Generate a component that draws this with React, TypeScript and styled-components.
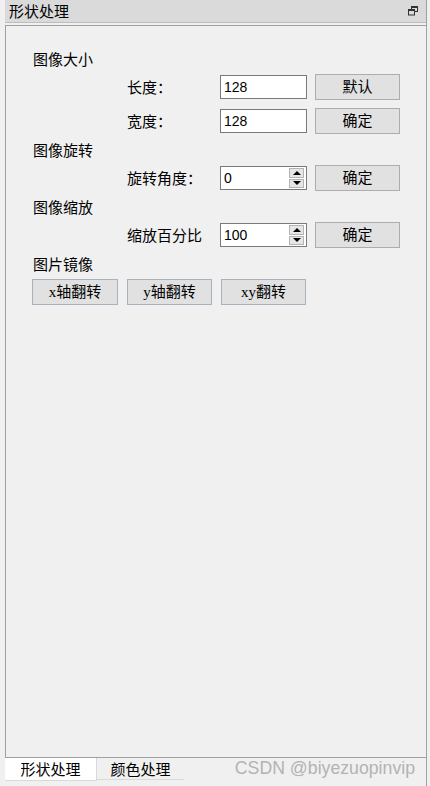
import styled, { createGlobalStyle } from "styled-components";

const GlobalStyle = createGlobalStyle`
  html, body {
    margin: 0;
    padding: 0;
    background: #f0f0f0;
  }
  body {
    font-family: "Noto Sans CJK SC", "Liberation Sans", sans-serif;
    color: #000;
  }
`;

const Dock = styled.div`
  box-sizing: border-box;
  display: flex;
  flex-direction: column;
  width: 422px;
  height: 786px;
  margin-left: 5px;
  border-right: 1px solid #a0a0a0;
`;

const TitleBar = styled.header`
  box-sizing: border-box;
  display: flex;
  flex: none;
  align-items: center;
  justify-content: space-between;
  height: 23px;
  margin-bottom: 2px;
  padding: 0 7px 0 4px;
  border-bottom: 1px solid #bdbdbd;
  background: #dadada;
  font-size: 15px;
  line-height: 22px;
`;

const Frame = styled.section`
  box-sizing: border-box;
  flex: 1;
  border: 1px solid #a0a0a0;
  border-right: none;
  padding: 23px 0 0 27px;
`;

const Heading = styled.div`
  height: 20px;
  font-size: 15px;
  line-height: 20px;
`;

const Group = styled.div`
  display: flex;
  flex-direction: column;
  gap: 8px;
  padding: 5px 0 6px;
`;

const FieldRow = styled.div`
  display: grid;
  grid-template-columns: 85px 87px 85px;
  column-gap: 8px;
  align-items: center;
  height: 26px;
  padding-left: 94px;
`;

const Label = styled.span`
  font-size: 15px;
  line-height: 20px;
  white-space: nowrap;
`;

const Field = styled.div`
  box-sizing: border-box;
  display: flex;
  align-items: center;
  height: 24px;
  padding-left: 3px;
  border: 1px solid #7a7a7a;
  background: #fff;
  font-family: "Liberation Sans", sans-serif;
  font-size: 14px;
`;

const FieldValue = styled.span`
  flex: 1;
`;

const SpinButtons = styled.div`
  display: flex;
  flex-direction: column;
  gap: 1px;
  width: 15px;
  height: 20px;
  margin-right: 2px;
`;

const SpinButton = styled.div`
  box-sizing: border-box;
  display: flex;
  flex: 1;
  align-items: center;
  justify-content: center;
  border: 1px solid #b4b4b4;
  background: #e6e6e6;
`;

const Arrow = styled.span<{ $up?: boolean }>`
  width: 0;
  height: 0;
  border-left: 4px solid transparent;
  border-right: 4px solid transparent;
  ${(p) =>
    p.$up ? "border-bottom: 4px solid #000;" : "border-top: 4px solid #000;"}
`;

const Button = styled.button<{ $cool?: boolean }>`
  box-sizing: border-box;
  height: 26px;
  margin: 0;
  padding: 0;
  border: 1px solid ${(p) => (p.$cool ? "#a9b1bd" : "#adadad")};
  background: #e1e1e1;
  color: #000;
  font-family: "Liberation Serif", "Noto Sans CJK SC", serif;
  font-size: 15px;
  line-height: 24px;
`;

const MirrorRow = styled.div`
  display: grid;
  grid-template-columns: 86px 85px 85px;
  column-gap: 9px;
  margin-left: -1px;
`;

const TabBar = styled.footer`
  display: flex;
  flex: none;
  align-items: flex-start;
  height: 28px;
`;

const Tab = styled.div<{ $active?: boolean }>`
  box-sizing: border-box;
  width: ${(p) => (p.$active ? 92 : 87)}px;
  height: ${(p) => (p.$active ? 23 : 22)}px;
  border-bottom: 1px solid #d9d9d9;
  border-right: ${(p) => (p.$active ? "1px solid #d9d9d9" : "none")};
  background: ${(p) => (p.$active ? "#fff" : "transparent")};
  font-size: 15px;
  line-height: 22px;
  text-align: center;
`;

const Watermark = styled.span`
  margin: 0 11px 0 auto;
  color: #b3b3b3;
  font-family: "Liberation Sans", sans-serif;
  font-size: 17.7px;
  line-height: 20px;
`;

function FloatIcon() {
  return (
    <svg width="11" height="10" viewBox="0 0 11 10" aria-hidden="true">
      <rect x="3.5" y="0.5" width="6" height="5" fill="none" stroke="#333" />
      <rect x="3" y="0" width="7" height="2" fill="#333" />
      <rect x="0.5" y="3.5" width="6" height="5.5" fill="#dadada" stroke="#333" />
      <rect x="0" y="3" width="7" height="2" fill="#333" />
    </svg>
  );
}

function SpinBox({ value }: { value: string }) {
  return (
    <Field>
      <FieldValue>{value}</FieldValue>
      <SpinButtons>
        <SpinButton>
          <Arrow $up />
        </SpinButton>
        <SpinButton>
          <Arrow />
        </SpinButton>
      </SpinButtons>
    </Field>
  );
}

export default function App() {
  return (
    <>
      <GlobalStyle />
      <Dock>
        <TitleBar>
          <span>形状处理</span>
          <FloatIcon />
        </TitleBar>

        <Frame>
          <Heading>图像大小</Heading>
          <Group>
            <FieldRow>
              <Label>长度：</Label>
              <Field>128</Field>
              <Button>默认</Button>
            </FieldRow>
            <FieldRow>
              <Label>宽度：</Label>
              <Field>128</Field>
              <Button>确定</Button>
            </FieldRow>
          </Group>

          <Heading>图像旋转</Heading>
          <Group>
            <FieldRow>
              <Label>旋转角度：</Label>
              <SpinBox value="0" />
              <Button>确定</Button>
            </FieldRow>
          </Group>

          <Heading>图像缩放</Heading>
          <Group>
            <FieldRow>
              <Label>缩放百分比</Label>
              <SpinBox value="100" />
              <Button>确定</Button>
            </FieldRow>
          </Group>

          <Heading>图片镜像</Heading>
          <Group>
            <MirrorRow>
              <Button $cool>x轴翻转</Button>
              <Button $cool>y轴翻转</Button>
              <Button $cool>xy翻转</Button>
            </MirrorRow>
          </Group>
        </Frame>

        <TabBar>
          <Tab $active>形状处理</Tab>
          <Tab>颜色处理</Tab>
          <Watermark>CSDN @biyezuopinvip</Watermark>
        </TabBar>
      </Dock>
    </>
  );
}
